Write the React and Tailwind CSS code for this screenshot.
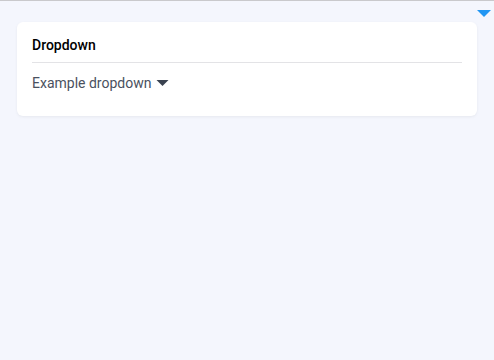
import React from 'react'

const Caret = ({ className }) => (
  <svg viewBox="0 0 14 7" className={className}>
    <path d="M0 0h14L7 7z" fill="currentColor" />
  </svg>
)

export default function App() {
  return (
    <div className="min-h-[360px] bg-[#f4f6fd] border-t border-[#c9c9cc] font-['Roboto',sans-serif] relative">
      <div className="absolute right-[3px] top-[9px] text-[#2196f3]">
        <Caret className="w-[14px] h-[7px]" />
      </div>
      <div className="pt-[21px] pl-[17px] pr-[17px]">
        <div className="bg-white rounded-md shadow-[0_1px_3px_rgba(0,0,0,0.06)] px-[15px] pt-[14px] pb-[23px]">
          <div className="text-[14px] font-medium text-black leading-[18px] pb-[8px] border-b border-[#e3e3e6]">
            Dropdown
          </div>
          <button className="mt-[10px] flex items-center gap-[5px] text-[14px] text-[#4a5160] leading-[20px]">
            Example dropdown
            <Caret className="w-[13px] h-[6px] text-[#3a4250]" />
          </button>
        </div>
      </div>
    </div>
  )
}
